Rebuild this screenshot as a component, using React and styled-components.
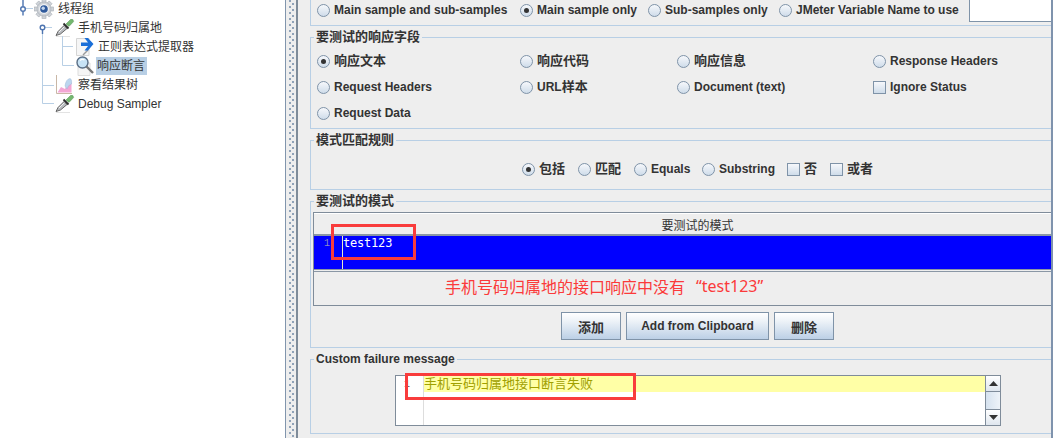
import React from "react";
import styled, { createGlobalStyle } from "styled-components";

const Global = createGlobalStyle`
  html, body { margin: 0; padding: 0; background: #fff; overflow: hidden; }
  #root { width: 1053px; height: 438px; }
`;
const Root = styled.div`
  width: 1053px; height: 438px; display: flex; overflow: hidden; position: relative;
  font-family: "Liberation Sans", "Noto Sans CJK SC", sans-serif;
`;
const TreePane = styled.div`
  width: 285px; flex: none; background: #fff; box-sizing: border-box;
  position: relative; font-size: 12px; color: #333;
`;
const TreeList = styled.div`
  margin-top: -1px;
`;
const TreeRow = styled.div`
  height: 19px; display: flex; align-items: center; padding-left: ${p => p.$indent}px;
`;
const TreeLabel = styled.span`
  margin-left: ${p => p.$gap ?? 2}px; padding: 0 2px 0 1px; line-height: 18px; white-space: nowrap;
  background: ${p => (p.$selected ? "#b8cfe5" : "transparent")};
`;
const Guides = styled.svg`
  position: absolute; left: 0; top: 0; pointer-events: none;
`;
const Splitter = styled.div`
  width: 13px; flex: none; box-sizing: border-box; background-color: #eee;
  border-left: 1px solid #8195ad; border-right: 2px solid #7f8c9a;
  background-image:
    linear-gradient(#8fa2b8 0 2px, transparent 2px),
    linear-gradient(#8fa2b8 0 2px, transparent 2px);
  background-size: 2px 6px;
  background-repeat: repeat-y;
  background-position: 3px 0, 6px 3px;
`;
const Main = styled.div`
  flex: 1; min-width: 0; background: #eee; border-right: 2px solid #7f93ad;
  box-sizing: border-box; padding-left: 12px; display: flex; flex-direction: column;
  color: #333; font-size: 12px; font-weight: 700;
`;
const TopGroup = styled.div`
  height: 26px; flex: none; box-sizing: border-box; border: 1px solid #b8cfe5; border-top: 0; border-right: 0;
  padding-left: 6px;
`;
const Group = styled.section`
  margin-top: 11px; box-sizing: border-box;
  height: ${p => p.$height}px; flex: none; border: 1px solid #b8cfe5; border-right: 0;
  position: relative;
`;
const Legend = styled.div`
  position: absolute; top: -9px; left: 3px; padding: 0 2px; background: #eee; line-height: 16px;
  font-weight: 700; white-space: nowrap;
`;
const Cjk = styled.span`
  font-size: 13px;
`;
const Option = styled.label`
  display: inline-flex; align-items: center; white-space: nowrap; line-height: 16px; flex: none;
  ${p => p.$w && `width: ${p.$w}px;`}
`;
const Radio = styled.span`
  width: 11px; height: 11px; border-radius: 50%; border: 1px solid #7f93a8; flex: none;
  background: linear-gradient(#f6f8fb, #cfdcea); margin-right: 4px; position: relative; display: inline-block;
  ${p => p.$on && `&::after { content: ""; position: absolute; left: 3px; top: 3px; width: 5px; height: 5px; border-radius: 50%; background: #333; }`}
`;
const Check = styled.span`
  width: 11px; height: 11px; border: 1px solid #7f93a8; flex: none; display: inline-block;
  background: linear-gradient(#f6f8fb, #cfdcea); margin-right: 4px;
`;
const SampleRow = styled.div`
  display: flex; align-items: center; height: 20px;
`;
const VarInput = styled.div`
  width: 82px; height: 22px; background: #fff; border: 1px solid #7f93a8; border-top: 0; border-right: 0;
  box-sizing: border-box; margin-left: 10px; align-self: flex-start; flex: none;
`;
const FieldGrid = styled.div`
  display: grid; grid-template-columns: 203px 157px 196px auto; grid-auto-rows: 26px;
  padding: 10px 0 0 6px;
`;
const MatchRow = styled.div`
  display: flex; align-items: center; padding: 20px 0 0 211px;
`;
const TableWrap = styled.div`
  margin: 10px 0 0 2px; border: 1px solid #7f8c9a; border-right: 0; border-bottom: 0;
`;
const TableHead = styled.div`
  height: 23px; border-top: 1px solid #fff; box-sizing: border-box; display: flex; align-items: center; justify-content: center;
  font-weight: 400; color: #333; border-bottom: 2px solid #8a97a5; font-size: 12px; padding-left: 30px;
`;
const TableRow = styled.div`
  height: 33px; background: #0000ff; display: flex; border-bottom: 1px solid #8a97a5;
`;
const Gutter = styled.div`
  width: 29px; flex: none; border-right: 1px solid #e8e8c8; color: #8a8ac0; font: 400 10px/1 "Liberation Mono", monospace;
  box-sizing: border-box; padding: 3px 0 0 10px;
`;
const Mono = styled.div`
  color: #fff; font: 400 12px/14px "DejaVu Sans Mono", monospace; letter-spacing: -0.2px;
`;
const NoteRow = styled.div`
  margin-top: 1px; height: 35px; border-top: 1px solid #8a97a5; border-bottom: 1px solid #7f8c9a;
  box-sizing: border-box; display: flex; align-items: center; padding: 0 0 5px 131px;
  color: #fb3a3a; font-family: "Noto Sans", "Noto Sans CJK SC", sans-serif; font-size: 16px; font-weight: 400; white-space: pre;
`;
const QuotedWord = styled.span`
  margin-left: 11px;
`;
const Buttons = styled.div`
  display: flex; gap: 5px; padding: 6px 0 0 250px;
`;
const Button = styled.button`
  width: ${p => p.$w}px; height: 28px; box-sizing: border-box; border: 1px solid #7f93a8; padding: 0;
  background: linear-gradient(#fff 0%, #eef3f8 30%, #bcd0e6 100%); color: #333;
  font: 700 12px "Liberation Sans", "Noto Sans CJK SC", sans-serif;
`;
const MessageBox = styled.div`
  margin: 15px 0 0 84px; width: 606px; height: 51px; display: flex; border: 1px solid #7f8c9a; box-sizing: border-box;
  background: #fff; font-weight: 400;
`;
const MsgGutter = styled.div`
  width: 27px; flex: none; border-right: 1px solid #ddd; color: #555; font: 400 10px/1 "Liberation Mono", monospace;
  padding-top: 4px; box-sizing: content-box; text-indent: 8px;
`;
const MsgBody = styled.div`
  flex: 1; min-width: 0;
`;
const MsgLine = styled.div`
  height: 16px; background: #ffffa6; color: #a0a000; font-size: 13px; line-height: 15px;
`;
const ScrollBar = styled.div`
  width: 15px; flex: none; display: flex; flex-direction: column; background: #eee; border-left: 1px solid #7f8c9a;
  box-sizing: border-box;
`;
const ScrollBtn = styled.div`
  height: 16px; box-sizing: border-box; display: flex; align-items: center; justify-content: center;
  background: linear-gradient(#fff, #dfe6ee);
  border-bottom: ${p => (p.$up ? "1px solid #7f8c9a" : "0")};
  border-top: ${p => (p.$up ? "0" : "1px solid #7f8c9a")};
`;
const ScrollThumb = styled.div`
  flex: 1; background: linear-gradient(90deg, #d6e2ef, #eef3f8);
`;
const Callout = styled.div`
  position: absolute; border: 3px solid #f93c3c; box-sizing: border-box; pointer-events: none;
  left: ${p => p.$x}px; top: ${p => p.$y}px; width: ${p => p.$w}px; height: ${p => p.$h}px;
`;

const Gear = () => (
  <svg width="20" height="20" viewBox="0 0 20 20">
    <g fill="#cfd3d8" stroke="#a5abb3" strokeWidth="0.6">
      {[0,45,90,135,180,225,270,315].map(a => <rect key={a} x="8" y="0.6" width="4" height="4.4" transform={`rotate(${a} 10 10)`} />)}
      <circle cx="10" cy="10" r="7" />
    </g>
    <circle cx="10" cy="10" r="5" fill="#eef0f3" />
    <circle cx="10" cy="10" r="3.8" fill="#2f5a9c" />
    <circle cx="9.2" cy="9.2" r="1.7" fill="#c3d6ee" />
  </svg>
);
const Dropper = () => (
  <svg width="20" height="20" viewBox="0 0 20 20">
    <path d="M1 18.5 H15" stroke="#e3e3e3" strokeWidth="1" />
    <path d="M1 17.5 L3 13.5 L9 7.5 L12 10.5 L5.5 16 Z" fill="#b9bcc0" stroke="#4a4a4a" strokeWidth="0.8" />
    <path d="M4 14 L9.5 8.6" stroke="#f4f4f4" strokeWidth="1" />
    <path d="M8.5 5.5 L13.5 10.5" stroke="#2b2b2b" strokeWidth="1.8" />
    <path d="M11 6 L15.5 1.5 Q18.6 0.6 18.6 3.6 L14 8.4 Z" fill="#74b86f" stroke="#538f52" strokeWidth="0.5" />
  </svg>
);
const Extractor = () => (
  <svg width="20" height="20" viewBox="0 0 20 20">
    <path d="M1.5 1.5 H14 V18.5 H1.5 Z" fill="#f6f6f6" stroke="#d5d5d5" />
    <path d="M8 18 L13 13" stroke="#9a9a9a" strokeWidth="1.5" />
    <path d="M9.5 1 H13 L18.5 7 L13 13.5 H9.5 L13 9 H6 V5.5 H13 Z" fill="#1a6fd8" />
  </svg>
);
const Magnifier = () => (
  <svg width="20" height="20" viewBox="0 0 20 20">
    <path d="M3 7 H15 V19.5 H3 Z" fill="#f5f5f5" stroke="#ddd" />
    <circle cx="7.5" cy="6.5" r="5.5" fill="#c8e3f5" stroke="#5b6f86" strokeWidth="1.4" />
    <path d="M5 4.5 Q7 2.5 9.5 4" stroke="#fff" strokeWidth="1.2" fill="none" />
    <path d="M11.5 10.5 L18 17" stroke="#777" strokeWidth="2.4" />
  </svg>
);
const ResultTree = () => (
  <svg width="20" height="20" viewBox="0 0 20 20">
    <path d="M1.5 0 V18.5 H17" stroke="#c9b7a6" fill="none" />
    <path d="M2.5 17.5 L6 12 L10 14 L12 9 Q15 5 16.5 8 V17.5 Z" fill="#f3a6d4" />
    <path d="M10 11 Q11 4 15 3.5 Q17 4 16.5 9 Q13 10 12 14 Z" fill="#bcd6ef" stroke="#9cb8d6" strokeWidth="0.5" />
  </svg>
);
const Tri = ({ up }) => (
  <svg width="9" height="5" viewBox="0 0 9 5"><path d={up ? "M4.5 0 L9 5 H0 Z" : "M0 0 H9 L4.5 5 Z"} fill="#333" /></svg>
);

export default function App() {
  return (
    <Root>
      <Global />
      <TreePane>
        <Guides width="285" height="120" viewBox="0 0 285 120">
          <g stroke="#b8cfe5" fill="none">
            <path d="M25.5 8.5 H33" />
            <path d="M42.5 31 V103.5 H54 M42.5 85.5 H54 M45 27.5 H52" />
            <path d="M62.5 36 V65.5 H74 M62.5 46.5 H73" />
          </g>
          <g stroke="#4d74b0" strokeWidth="1.4" fill="#fff">
            <path d="M23 0 V6 M23 11.5 V15.5" />
            <circle cx="23" cy="9" r="2.3" />
            <path d="M42.5 30 V34" />
            <circle cx="42.5" cy="27.5" r="2.3" />
          </g>
        </Guides>
        <TreeList>
          <TreeRow $indent={34}><Gear /><TreeLabel $gap={3}>线程组</TreeLabel></TreeRow>
          <TreeRow $indent={55}><Dropper /><TreeLabel $gap={2}>手机号码归属地</TreeLabel></TreeRow>
          <TreeRow $indent={75}><Extractor /><TreeLabel $gap={2}>正则表达式提取器</TreeLabel></TreeRow>
          <TreeRow $indent={75}><Magnifier /><TreeLabel $gap={1} $selected>响应断言</TreeLabel></TreeRow>
          <TreeRow $indent={55}><ResultTree /><TreeLabel $gap={2}>察看结果树</TreeLabel></TreeRow>
          <TreeRow $indent={55}><Dropper /><TreeLabel $gap={2}>Debug Sampler</TreeLabel></TreeRow>
        </TreeList>
      </TreePane>
      <Splitter />
      <Main>
        <TopGroup>
          <SampleRow>
            <Option $w={203}><Radio />Main sample and sub-samples</Option>
            <Option $w={128}><Radio $on />Main sample only</Option>
            <Option $w={131}><Radio />Sub-samples only</Option>
            <Option><Radio />JMeter Variable Name to use</Option>
            <VarInput />
          </SampleRow>
        </TopGroup>
        <Group $height={92}>
          <Legend><Cjk>要测试的响应字段</Cjk></Legend>
          <FieldGrid>
            <Option><Radio $on /><Cjk>响应文本</Cjk></Option>
            <Option><Radio /><Cjk>响应代码</Cjk></Option>
            <Option><Radio /><Cjk>响应信息</Cjk></Option>
            <Option><Radio />Response Headers</Option>
            <Option><Radio />Request Headers</Option>
            <Option><Radio />URL<Cjk>样本</Cjk></Option>
            <Option><Radio />Document (text)</Option>
            <Option><Check />Ignore Status</Option>
            <Option><Radio />Request Data</Option>
          </FieldGrid>
        </Group>
        <Group $height={50}>
          <Legend><Cjk>模式匹配规则</Cjk></Legend>
          <MatchRow>
            <Option $w={56}><Radio $on /><Cjk>包括</Cjk></Option>
            <Option $w={56}><Radio /><Cjk>匹配</Cjk></Option>
            <Option $w={68}><Radio />Equals</Option>
            <Option $w={85}><Radio />Substring</Option>
            <Option $w={43}><Check /><Cjk>否</Cjk></Option>
            <Option><Check /><Cjk>或者</Cjk></Option>
          </MatchRow>
        </Group>
        <Group $height={147}>
          <Legend><Cjk>要测试的模式</Cjk></Legend>
          <TableWrap>
            <TableHead>要测试的模式</TableHead>
            <TableRow>
              <Gutter>1</Gutter>
              <Mono>test123</Mono>
            </TableRow>
            <NoteRow>手机号码归属地的接口响应中没有<QuotedWord>“test123”</QuotedWord></NoteRow>
          </TableWrap>
          <Buttons>
            <Button $w={60}><Cjk>添加</Cjk></Button>
            <Button $w={143}>Add from Clipboard</Button>
            <Button $w={60}><Cjk>删除</Cjk></Button>
          </Buttons>
        </Group>
        <Group $height={75}>
          <Legend>Custom failure message</Legend>
          <MessageBox>
            <MsgGutter>1</MsgGutter>
            <MsgBody><MsgLine>手机号码归属地接口断言失败</MsgLine></MsgBody>
            <ScrollBar>
              <ScrollBtn $up><Tri up /></ScrollBtn>
              <ScrollThumb />
              <ScrollBtn><Tri /></ScrollBtn>
            </ScrollBar>
          </MessageBox>
        </Group>
      </Main>
      <Callout $x={331} $y={224} $w={85} $h={36} />
      <Callout $x={405} $y={373} $w={231} $h={27} />
    </Root>
  );
}
